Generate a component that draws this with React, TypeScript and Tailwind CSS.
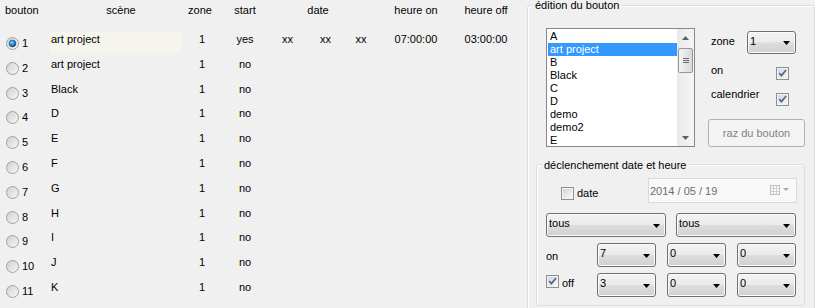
import React from 'react';

const rows: [string, string, string][] = [
  ['1', 'art project', 'yes'],
  ['2', 'art project', 'no'],
  ['3', 'Black', 'no'],
  ['4', 'D', 'no'],
  ['5', 'E', 'no'],
  ['6', 'F', 'no'],
  ['7', 'G', 'no'],
  ['8', 'H', 'no'],
  ['9', 'I', 'no'],
  ['10', 'J', 'no'],
  ['11', 'K', 'no'],
];

const listItems = ['A', 'art project', 'B', 'Black', 'C', 'D', 'demo', 'demo2', 'E'];

function Radio({ checked }: { checked?: boolean }) {
  return (
    <svg width="13" height="13" viewBox="0 0 13 13" className="block">
      <defs>
        <linearGradient id="rbg" x1="0" y1="0" x2="1" y2="1">
          <stop offset="0" stopColor="#cfcfcf" />
          <stop offset="1" stopColor="#f8f8f8" />
        </linearGradient>
        <radialGradient id="rdot" cx="0.4" cy="0.35" r="0.75">
          <stop offset="0" stopColor="#9adcff" />
          <stop offset="0.45" stopColor="#2c8ad0" />
          <stop offset="1" stopColor="#0b3a6c" />
        </radialGradient>
      </defs>
      <circle cx="6.5" cy="6.5" r="6" fill="url(#rbg)" stroke="#a2a2a2" />
      {checked && <circle cx="6.5" cy="6.5" r="3.4" fill="url(#rdot)" stroke="#1f4f7e" strokeWidth="0.6" />}
    </svg>
  );
}

function Check({ checked }: { checked?: boolean }) {
  return (
    <svg width="13" height="13" viewBox="0 0 13 13" className="block shrink-0">
      <defs>
        <linearGradient id="cbg" x1="0" y1="0" x2="1" y2="1">
          <stop offset="0" stopColor="#d3d6db" />
          <stop offset="1" stopColor="#f7f7f7" />
        </linearGradient>
      </defs>
      <rect x="0.5" y="0.5" width="12" height="12" fill="#f4f4f4" stroke="#8e8f8f" />
      <rect x="2" y="2" width="9" height="9" fill="url(#cbg)" />
      {checked && (
        <path d="M2.6 6.6 L3.9 5.4 L5.3 7.2 L9.6 2.4 L10.7 3.6 L5.4 10 Z" fill="#4d6497" />
      )}
    </svg>
  );
}

function Arrow({ color = '#000' }: { color?: string }) {
  return (
    <svg width="7" height="4" viewBox="0 0 7 4" className="block shrink-0">
      <path d="M0 0 H7 L3.5 4 Z" fill={color} />
    </svg>
  );
}

function Combo({ value, w, h = 'h-[24px]', arrowTop = 'mt-[10px]' }: { value: string; w: string; h?: string; arrowTop?: string }) {
  return (
    <div
      className={`flex ${w} ${h} shrink-0 items-start justify-between rounded-[3px] border border-[#707070] bg-[linear-gradient(to_bottom,#f3f3f3_0%,#ebebeb_48%,#dddddd_52%,#d0d0d0_100%)] pl-[2px] pr-[5px] shadow-[inset_0_0_0_1px_#fbfbfb]`}
    >
      <span className="pt-[3px]">{value}</span>
      <div className={arrowTop}>
        <Arrow />
      </div>
    </div>
  );
}

function ListBox() {
  return (
    <div className="flex h-[119px] w-[149px] shrink-0 border border-[#828790] bg-white">
      <div className="w-[130px] overflow-hidden py-[1px] pl-[1px]">
        {listItems.map((it) => (
          <div
            key={it}
            className={`h-[13px] pl-[2px] leading-[13px] ${it === 'art project' ? 'bg-[#3399ff] text-white' : ''}`}
          >
            {it}
          </div>
        ))}
      </div>
      {/* scrollbar */}
      <div className="flex w-[17px] flex-col bg-[linear-gradient(to_right,#e9e9e9,#f6f6f6)]">
        <div className="flex h-[17px] items-center justify-center">
          <svg width="7" height="4" viewBox="0 0 7 4">
            <path d="M0 4 H7 L3.5 0 Z" fill="#606060" />
          </svg>
        </div>
        <div className="flex-1">
          <div className="mx-[1px] mt-[2px] flex h-[25px] flex-col items-center justify-center gap-[1px] rounded-[2px] border border-[#979797] bg-[linear-gradient(to_right,#f4f4f4,#d9d9d9)]">
            <div className="h-[1px] w-[6px] bg-[#6a6a6a]" />
            <div className="h-[1px] w-[6px] bg-[#6a6a6a]" />
            <div className="h-[1px] w-[6px] bg-[#6a6a6a]" />
          </div>
        </div>
        <div className="flex h-[17px] items-center justify-center">
          <svg width="7" height="4" viewBox="0 0 7 4">
            <path d="M0 0 H7 L3.5 4 Z" fill="#606060" />
          </svg>
        </div>
      </div>
    </div>
  );
}

export default function App() {
  return (
    <div className="flex h-[308px] w-[815px] overflow-hidden bg-[#f0f0f0] font-['Liberation_Sans',Arial,sans-serif] text-[11px] leading-[13px] text-black">
      {/* tableau des boutons */}
      <div className="w-[527px] shrink-0">
        <div className="flex h-[30px] whitespace-nowrap pt-[4px]">
          <div className="w-[50px] pl-[5px]">bouton</div>
          <div className="w-[131px] pl-[11px] text-center">scène</div>
          <div className="w-[42px] pr-[4px] text-center">zone</div>
          <div className="w-[44px] text-center">start</div>
          <div className="w-[112px] pr-[10px] text-center">date</div>
          <div className="w-[74px] text-center">heure on</div>
          <div className="w-[66px] text-center">heure off</div>
        </div>
        {rows.map(([n, scene, start], i) => (
          <div key={n} className="flex h-[24.8px] items-start whitespace-nowrap">
            <div className="flex w-[50px] items-start">
              <div className="ml-[6px] mt-[7px]">
                <Radio checked={i === 0} />
              </div>
              <span className="ml-[3px] pt-[7px]">{n}</span>
            </div>
            <div className="w-[131px] pt-[2px]">
              <div className={`h-[21px] pl-[1px] pt-[1px] ${i === 0 ? 'bg-[#f5f4ed]' : ''}`}>{scene}</div>
            </div>
            <div className="w-[42px] pt-[3px] text-center">1</div>
            <div className="w-[44px] pt-[3px] text-center">{start}</div>
            {i === 0 && (
              <>
                <div className="w-[41px] pt-[3px] text-center">xx</div>
                <div className="w-[35px] pt-[3px] text-center">xx</div>
                <div className="w-[36px] pt-[3px] text-center">xx</div>
                <div className="w-[74px] pt-[3px] text-center">07:00:00</div>
                <div className="w-[66px] pt-[3px] text-center">03:00:00</div>
              </>
            )}
          </div>
        ))}
      </div>

      {/* édition du bouton */}
      <div className="mt-[5px] h-[330px] w-[288px] shrink-0 rounded-[3px] border border-[#d5dfe5] shadow-[inset_1px_1px_0_#ffffff]">
        <div className="-mt-[7px] ml-[5px] w-fit bg-[#f0f0f0] px-[2px]">édition du bouton</div>

        <div className="ml-[18px] mt-[16px] flex h-[119px]">
          <ListBox />
          <div className="ml-[13px] flex w-[97px] flex-col">
            <div className="mt-[3px] flex h-[23px] items-start">
              <div className="w-[39px] pl-[3px] pt-[4px]">zone</div>
              <Combo value="1" w="w-[49px]" h="h-[23px]" arrowTop="mt-[9px]" />
            </div>
            <div className="mt-[10px] flex h-[16px] items-start">
              <div className="w-[68px] pl-[3px]">on</div>
              <div className="mt-[3px]">
                <Check checked />
              </div>
            </div>
            <div className="mt-[8px] flex h-[16px] items-start">
              <div className="w-[68px] pl-[3px]">calendrier</div>
              <div className="mt-[5px]">
                <Check checked />
              </div>
            </div>
            <div className="mt-[15px] flex h-[28px] w-[97px] items-center justify-center rounded-[3px] border border-[#adb2b5] bg-[#f4f4f4] text-[#838383]">
              raz du bouton
            </div>
          </div>
        </div>

        {/* déclenchement date et heure */}
        <div className="ml-[8px] mt-[17px] h-[142px] w-[269px] rounded-[3px] border border-[#d5dfe5] shadow-[inset_1px_1px_0_#ffffff]">
          <div className="-mt-[6px] ml-[5px] w-fit bg-[#f0f0f0] px-[2px]">déclenchement date et heure</div>
          <div className="pl-[9px] pr-[7px]">
            <div className="mt-[6px] flex h-[25px] items-start justify-between">
              <div className="flex items-start">
                <div className="ml-[15px] mt-[9px]">
                  <Check />
                </div>
                <span className="ml-[3px] pt-[9px]">date</span>
              </div>
              <div className="flex h-[25px] w-[149px] items-start justify-between border border-[#d9d9d9] bg-[#f9f9f9] pl-[1px] pr-[7px] text-[#6d6d6d]">
                <span className="pt-[6px]">2014 / 05 / 19</span>
                <div className="mt-[6px] flex items-start gap-[3px]">
                  <svg width="10" height="10" viewBox="0 0 10 10" className="block">
                    <rect x="0.5" y="0.5" width="9" height="9" fill="#fbfbfb" stroke="#bdbdbd" />
                    <path d="M0.5 3.5 H9.5 M0.5 6.5 H9.5 M3.5 0.5 V9.5 M6.5 0.5 V9.5" stroke="#d0d0d0" strokeWidth="1" />
                  </svg>
                  <div className="mt-[3px]">
                    <svg width="6" height="3" viewBox="0 0 6 3" className="block">
                      <path d="M0 0 H6 L3 3 Z" fill="#a8a8a8" />
                    </svg>
                  </div>
                </div>
              </div>
            </div>

            <div className="mt-[10px] flex gap-[10px]">
              <Combo value="tous" w="w-[120px]" />
              <Combo value="tous" w="w-[120px]" />
            </div>

            <div className="mt-[6px] flex items-start">
              <div className="w-[51px] pt-[7px]">on</div>
              <div className="flex gap-[11px]">
                <Combo value="7" w="w-[59px]" />
                <Combo value="0" w="w-[59px]" />
                <Combo value="0" w="w-[59px]" />
              </div>
            </div>

            <div className="mt-[6px] flex items-start">
              <div className="flex w-[51px] items-start">
                <div className="mt-[2px]">
                  <Check checked />
                </div>
                <span className="ml-[3px] pt-[4px]">off</span>
              </div>
              <div className="flex gap-[11px]">
                <Combo value="3" w="w-[59px]" />
                <Combo value="0" w="w-[59px]" />
                <Combo value="0" w="w-[59px]" />
              </div>
            </div>
          </div>
        </div>
      </div>
    </div>
  );
}
